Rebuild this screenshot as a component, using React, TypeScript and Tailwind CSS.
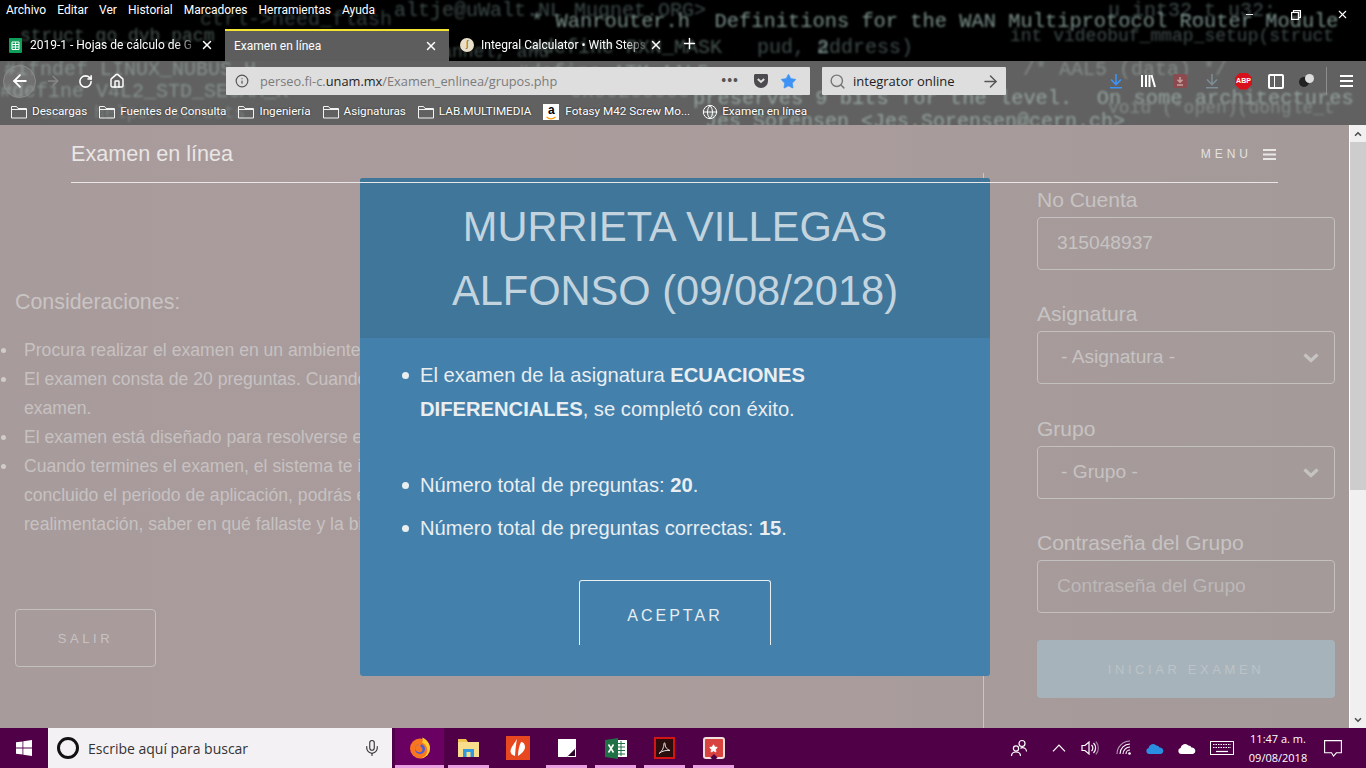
import type { ReactNode } from "react";
import { ChevronUp, ChevronDown, Globe, Info, Mic, Search, ArrowRight, ArrowLeft, RotateCw, Home, Star, X, Plus, Minus } from "lucide-react";

const font = "font-['Liberation_Sans',Arial,sans-serif]";

const codeTop = [
  { text: "altje@uWalt.NL Mugnet.ORG>", cls: "left-[394px] top-[1px] text-[20px] text-[#3c4a48]" },
  { text: "u_int32_t u32;", cls: "left-[1108px] top-[1px] text-[20px] text-[#3f4c4a]" },
  { text: "* Wanrouter.h  Definitions for the WAN Multiprotocol Router Module", cls: "left-[531px] top-[12px] text-[20.4px] text-[#7a908a]" },
  { text: "int videobuf_mmap_setup(struct", cls: "left-[1010px] top-[27px] text-[18px] text-[#3f4c4a]" },
  { text: "ctrl->need_flash", cls: "left-[200px] top-[10px] text-[20px] text-[#323e3c]" },
  { text: "struct go_dvb_pacm", cls: "left-[20px] top-[27px] text-[18px] text-[#46564f]" },
  { text: "contr,", cls: "left-[330px] top-[35px] text-[20px] text-[#54645f]" },
  { text: "second channel, and", cls: "left-[344px] top-[43px] text-[18px] text-[#3f4c4a]" },
  { text: "#define RXN_MASK", cls: "left-[530px] top-[38px] text-[20px] text-[#46564f]" },
  { text: "pud, address)", cls: "left-[757px] top-[38px] text-[20px] text-[#3f4c4a]" },
  { text: "2", cls: "left-[817px] top-[38px] text-[20px] text-[#7a908a]" },
];

const codeBar = [
  { text: "#ifndef LINUX_NUBUS_H", cls: "left-[4px] top-[-1px] text-[20px] text-[#84918d]" },
  { text: "#define ATM_AAL5", cls: "left-[517px] top-[2px] text-[20px] text-[#84918d]" },
  { text: "/* AAL5 (data) */", cls: "left-[1023px] top-[-1px] text-[20px] text-[#828a88]" },
  { text: "#define V4L2_STD_SECAM_K", cls: "left-[0px] top-[21px] text-[20px] text-[#84918d]" },
  { text: "0x00200000", cls: "left-[570px] top-[21px] text-[20px] text-[#828a88]" },
  { text: "preserves 9 bits for the level.  On some architectures", cls: "left-[693px] top-[28px] text-[20.4px] text-[#93a39e]" },
  { text: "void (*open)(dongle_t", cls: "left-[1108px] top-[38px] text-[18px] text-[#828a88]" },
  { text: "Jes Sorensen <Jes.Sorensen@cern.ch>", cls: "left-[705px] top-[51px] text-[20px] text-[#93a39e]" },
  { text: "some helper structs", cls: "left-[40px] top-[43px] text-[18px] text-[#787f7d]" },
];

const bookmarks = ["Descargas", "Fuentes de Consulta", "Ingeniería", "Asignaturas", "LAB.MULTIMEDIA"];

function FolderIcon() {
  return (
    <svg width="16" height="14" viewBox="0 0 16 14" fill="none" stroke="#f2f2f2" strokeWidth="1">
      <path d="M.5 13V1.500h5l1.500 2h8.500V13z" />
      <path d="M.5 4.500h15" />
    </svg>
  );
}

function DownloadArrow({ color }: { color: string }) {
  return (
    <svg width="16" height="16" viewBox="0 0 16 16" fill="none" stroke={color} strokeWidth="1.600">
      <path d="M8 1v10M3 6.500 8 11.500l5-5M2 14.700h12" />
    </svg>
  );
}

function CloseBtn() {
  return <X size={14} strokeWidth={2.5} className="shrink-0 text-white" />;
}

function BrowserChrome() {
  return (
    <div className="relative h-[125px] shrink-0 overflow-hidden bg-black">
      {/* title area */}
      <div className="relative h-[61px] overflow-hidden">
        {codeTop.map((c) => (
          <span key={c.text} className={`absolute whitespace-pre font-['Liberation_Mono',monospace] leading-none blur-[1px] ${c.cls}`}>
            {c.text}
          </span>
        ))}
        <div className="absolute inset-x-0 top-0 flex h-[20px] items-center gap-[11px] pl-[6px] font-['Roboto',sans-serif] text-[12px] text-white">
          {["Archivo", "Editar", "Ver", "Historial", "Marcadores", "Herramientas", "Ayuda"].map((m) => (
            <span key={m} className="[text-shadow:0_0_2px_#000]">{m}</span>
          ))}
        </div>
        <div className="absolute right-0 top-[8px] flex w-[122px] items-center justify-between pr-[17px]">
          <Minus size={11} strokeWidth={2} className="text-white" />
          <svg width="10" height="10" viewBox="0 0 10 10" fill="none" stroke="#fff" strokeWidth="1.200">
            <path d="M2.500 2.500V.6h6.900v6.900H7.500" />
            <rect x=".6" y="2.500" width="6.900" height="6.900" />
          </svg>
          <X size={13} strokeWidth={2} className="text-white" />
        </div>
        {/* tabs */}
        <div className="absolute left-0 top-[29px] flex h-[32px] items-stretch font-['Roboto',sans-serif] text-[12px] text-white">
          <div className="flex w-[225px] items-center pl-[9px] pr-[11px]">
            <svg width="13" height="15" viewBox="0 0 13 15" className="mr-[8px] shrink-0">
              <rect width="13" height="15" rx="1" fill="#0f9d58" />
              <path d="M3 4h7v7.500H3zM3 6.500h7M3 9h7M6.500 4v7.500" stroke="#fff" strokeWidth="1" fill="none" />
            </svg>
            <span className="flex-1 overflow-hidden whitespace-nowrap [mask-image:linear-gradient(to_right,#000_85%,transparent)]">2019-1 - Hojas de cálculo de G</span>
            <CloseBtn />
          </div>
          <div className="flex w-[224px] items-center justify-between border-t-2 border-[#f4e32f] bg-[#5d5d5d] pl-[9px] pr-[11px]">
            <span>Examen en línea</span>
            <CloseBtn />
          </div>
          <div className="flex w-[225px] items-center pl-[11px] pr-[11px]">
            <span className="mr-[7px] flex h-[14px] w-[14px] shrink-0 items-center justify-center rounded-full bg-[#e9dfc8] text-[9px] text-[#6b5a3a]">∫</span>
            <span className="flex-1 overflow-hidden whitespace-nowrap [mask-image:linear-gradient(to_right,#000_85%,transparent)]">Integral Calculator • With Steps</span>
            <CloseBtn />
          </div>
          <Plus size={17} strokeWidth={2} className="ml-[7px] mt-[6px] text-white" />
        </div>
      </div>

      {/* toolbar and bookmarks */}
      <div className="relative h-[64px] overflow-hidden bg-[#616161]">
        {codeBar.map((c) => (
          <span key={c.text} className={`absolute whitespace-pre font-['Liberation_Mono',monospace] leading-none blur-[1px] ${c.cls}`}>
            {c.text}
          </span>
        ))}
        <div className="relative flex h-[40px] items-center">
          <div className="ml-[3px] flex h-[33px] w-[33px] shrink-0 items-center justify-center rounded-full border border-[#8a8a8a] bg-white/10">
            <ArrowLeft size={20} strokeWidth={2.200} className="text-white" />
          </div>
          <ArrowRight size={16} strokeWidth={2} className="ml-[9px] shrink-0 text-[#888]" />
          <RotateCw size={15} strokeWidth={2.500} className="ml-[17px] shrink-0 text-white" />
          <Home size={16} strokeWidth={2.200} className="ml-[16px] shrink-0 text-white" />
          <div className="ml-[101px] flex h-[28px] w-[584px] shrink-0 items-center rounded-[1px] bg-[#dedede] pl-[9px] pr-[13px] font-['Open_Sans',sans-serif] text-[12.8px] text-[#7b7b7b]">
            <Info size={14} className="mr-[11px] shrink-0 text-[#555]" />
            <span className="flex-1 pt-[2px]">perseo.fi-c.<span className="text-[#222]">unam.mx</span>/Examen_enlinea/grupos.php</span>
            <span className="mr-[14px] text-[13px] font-bold tracking-[1px] text-[#555]">•••</span>
            <svg width="16" height="16" viewBox="0 0 16 16" className="mr-[11px] shrink-0">
              <path d="M1 2.500C1 1.700 1.700 1 2.500 1h11c.8 0 1.500.7 1.500 1.500V8a7 7 0 0 1-14 0z" fill="#4a4a4f" />
              <path d="M4.800 6 8 9l3.200-3" fill="none" stroke="#dedede" strokeWidth="2" />
            </svg>
            <Star size={17} fill="#3d93f5" strokeWidth={1} className="shrink-0 text-[#3d93f5]" />
          </div>
          <div className="ml-[12px] flex h-[28px] w-[184px] shrink-0 items-center rounded-[1px] bg-[#dedede] pl-[7px] pr-[6px] font-['Open_Sans',sans-serif] text-[13px] text-[#222]">
            <Search size={17} strokeWidth={2} className="mr-[7px] shrink-0 text-[#777]" />
            <span className="flex-1 pt-[2px]">integrator online</span>
            <ArrowRight size={19} strokeWidth={1.800} className="shrink-0 text-[#555]" />
          </div>
          <div className="ml-[102px] shrink-0"><DownloadArrow color="#3d93f5" /></div>
          <svg width="16" height="16" viewBox="0 0 16 16" className="ml-[16px] shrink-0" fill="none" stroke="#fff" strokeWidth="2">
            <path d="M2 2v12M6 2v12M9.500 2v12M11.500 2l3.500 12" />
          </svg>
          <div className="ml-[17px] flex h-[14px] w-[14px] shrink-0 items-center justify-center rounded-[2px] bg-[#8a4a4e]">
            <svg width="10" height="10" viewBox="0 0 10 10" fill="none" stroke="#c9a0a0" strokeWidth="1.500">
              <path d="M5 1v5M2.500 3.800 5 6.300l2.500-2.500M2 9h6" />
            </svg>
          </div>
          <div className="ml-[17px] shrink-0"><DownloadArrow color="#7d8c95" /></div>
          <div className={`ml-[15px] flex h-[17px] w-[17px] shrink-0 items-center justify-center bg-[#d8101c] text-[7px] font-bold text-white [clip-path:polygon(30%_0,70%_0,100%_30%,100%_70%,70%_100%,30%_100%,0_70%,0_30%)] ${font}`}>
            ABP
          </div>
          <div className="ml-[16px] flex h-[15px] w-[16px] shrink-0 rounded-[2px] border-2 border-white">
            <div className="w-[5px] border-r border-white" />
          </div>
          <div className="relative ml-[15px] h-[14px] w-[15px] shrink-0">
            <span className="absolute left-0 top-[3px] h-[10px] w-[10px] rounded-full bg-[#222]" />
            <span className="absolute right-0 top-0 h-[9px] w-[9px] rounded-full bg-[#ddd]" />
          </div>
          <div className="ml-[12px] h-[28px] w-px shrink-0 bg-[#8d8d8d]" />
          <svg width="13" height="12" viewBox="0 0 13 12" className="ml-[13px] shrink-0" stroke="#fff" strokeWidth="2">
            <path d="M0 1h13M0 6h13M0 11h13" />
          </svg>
        </div>
        <div className="relative flex h-[24px] items-center pb-[2px] pl-[11px] font-['Roboto',sans-serif] text-[11.7px] text-white [text-shadow:0_0_2px_#222]">
          {bookmarks.map((b) => (
            <span key={b} className="mr-[12px] flex items-center gap-[5px]">
              <FolderIcon />
              {b}
            </span>
          ))}
          <span className="mr-[12px] flex items-center gap-[6px]">
            <span className={`relative flex h-[16px] w-[16px] items-start justify-center bg-white text-[12px] font-bold leading-[12px] text-black [text-shadow:none] ${font}`}>
              a
              <svg width="10" height="4" viewBox="0 0 10 4" className="absolute bottom-0 left-[3px]" fill="none" stroke="#f90" strokeWidth="1.200">
                <path d="M.5 1c3 2.500 6 2.500 9 0" />
              </svg>
            </span>
            Fotasy M42 Screw Mo...
          </span>
          <span className="flex items-center gap-[4px]">
            <Globe size={16} strokeWidth={1.500} className="text-white" />
            Examen en línea
          </span>
        </div>
      </div>
    </div>
  );
}

function SelectChevron() {
  return (
    <svg width="16" height="11" viewBox="0 0 16 11" fill="none" stroke="#c6c3c3" strokeWidth="3.200">
      <path d="M1.500 2.500 8 8.500l6.500-6" />
    </svg>
  );
}

function Field({ label, children, last }: { label: string; children: ReactNode; last?: boolean }) {
  return (
    <div className={last ? "mb-[27px]" : "mb-[33.4px]"}>
      <div className="mb-[7px] text-[21px] leading-[21px] text-[#c6c3c3]">{label}</div>
      <div className="flex h-[53px] items-center justify-between rounded-[4px] border border-[#c3c0c0] pl-[19px] pr-[15px] text-[19.2px] text-[#c6c3c3]">
        {children}
      </div>
    </div>
  );
}

function PageContent() {
  return (
    <div className={`relative flex min-h-0 flex-1 ${font}`}>
      <div className="relative flex min-w-0 flex-1 flex-col overflow-hidden bg-gradient-to-r from-[#a89b9b] via-[#ab9c9c] to-[#a39a99]">
        {/* header */}
        <div className="relative z-10 mx-[71px] flex h-[58px] shrink-0 items-center justify-between border-b border-[#e8e6e6] pr-[2px] pt-[1px]">
          <span className="text-[21.6px] text-[#e9e6e6]">Examen en línea</span>
          <span className="flex items-center gap-[11px] text-[12px] tracking-[4px] text-[#e4e1e1]">
            MENU
            <svg width="13" height="11" viewBox="0 0 13 11" stroke="#e9e6e6" strokeWidth="2">
              <path d="M0 1h13M0 5.500h13M0 10h13" />
            </svg>
          </span>
        </div>

        <div className="flex min-h-0 flex-1">
          {/* left column */}
          <div className="w-[983px] shrink-0 pl-[15px] pt-[107px]">
            <h2 className="text-[21.4px] leading-[24px] text-[#c8c4c4]">Consideraciones:</h2>
            <ul className="mt-[22px] list-none text-[17.6px] leading-[29px] text-[#c6c2c2]">
              {[
                [true, "Procura realizar el examen en un ambiente"],
                [true, "El examen consta de 20 preguntas. Cuando"],
                [false, "examen."],
                [true, "El examen está diseñado para resolverse e"],
                [true, "Cuando termines el examen, el sistema te i"],
                [false, "concluido el periodo de aplicación, podrás e"],
                [false, "realimentación, saber en qué fallaste y la bi"],
              ].map(([bullet, line]) => (
                <li key={String(line)} className="relative -ml-[15px] whitespace-nowrap pl-[24px]">
                  {bullet && <span className="absolute left-[1px] top-[12px] h-[5px] w-[5px] rounded-full bg-[#cfcccc]" />}
                  {line}
                </li>
              ))}
            </ul>
            <div className="mt-[70px] flex h-[58px] w-[141px] items-center justify-center rounded-[4px] border border-[#c3c0c0] pt-[2px] text-[13px] tracking-[3.600px] text-[#c6c3c3]">
              SALIR
            </div>
          </div>

          {/* right column */}
          <div className="-mt-[10px] flex-1 border-l border-[#c9c6c6] pl-[53px] pr-[14px] pt-[16px]">
            <div className="w-[298px]">
              <Field label="No Cuenta">315048937</Field>
              <Field label="Asignatura">
                <span className="pl-[4px]">- Asignatura -</span>
                <SelectChevron />
              </Field>
              <Field label="Grupo">
                <span className="pl-[4px]">- Grupo -</span>
                <SelectChevron />
              </Field>
              <Field label="Contraseña del Grupo" last>
                <span className="text-[#bcb8b8]">Contraseña del Grupo</span>
              </Field>
              <div className="flex h-[58px] items-center justify-center rounded-[4px] bg-[#a6b3ba] pt-[2px] text-[13px] tracking-[3.600px] text-[#bcc3c8]">
                INICIAR EXAMEN
              </div>
            </div>
          </div>
        </div>

        {/* modal */}
        <div className="absolute left-[360px] top-[53px] h-[498px] w-[630px] overflow-hidden rounded-[3px] bg-[#4380ab]">
          <div className="flex h-[160px] flex-col items-center justify-center bg-[#3f769a] pt-[2px] text-[41.6px] leading-[64px] text-[#c3d4df]">
            <div>MURRIETA VILLEGAS</div>
            <div>ALFONSO (09/08/2018)</div>
          </div>
          <ul className="pl-[60px] pt-[20px] text-[20.2px] text-[#e9eef1]">
            <li className="relative w-[420px] leading-[34px]">
              <span className="absolute -left-[18px] top-[14px] h-[7px] w-[7px] rounded-full bg-[#e9eef1]" />
              El examen de la asignatura <b>ECUACIONES DIFERENCIALES</b>, se completó con éxito.
            </li>
            <li className="relative mt-[42px] leading-[34px]">
              <span className="absolute -left-[18px] top-[14px] h-[7px] w-[7px] rounded-full bg-[#e9eef1]" />
              Número total de preguntas: <b>20</b>.
            </li>
            <li className="relative mt-[9px] leading-[34px]">
              <span className="absolute -left-[18px] top-[14px] h-[7px] w-[7px] rounded-full bg-[#e9eef1]" />
              Número total de preguntas correctas: <b>15</b>.
            </li>
          </ul>
          <div className="ml-[219px] mt-[35px] flex h-[65px] w-[192px] items-center justify-center rounded-t-[3px] border-x border-t border-[#e9eef1] pt-[5px] text-[16px] tracking-[3px] text-[#e9eef1]">
            ACEPTAR
          </div>
        </div>
      </div>

      {/* scrollbar */}
      <div className="flex w-[17px] shrink-0 flex-col border-l border-[#fff] bg-[#f0f0f0]">
        <div className="flex h-[17px] items-center justify-center">
          <ChevronUp size={10} strokeWidth={4} className="text-[#505050]" />
        </div>
        <div className="h-[348px] bg-[#cdcdcd]" />
        <div className="flex-1" />
        <div className="flex h-[17px] items-center justify-center">
          <ChevronDown size={10} strokeWidth={4} className="text-[#505050]" />
        </div>
      </div>
    </div>
  );
}

function TaskCell({ children, active, line = true }: { children: ReactNode; active?: boolean; line?: boolean }) {
  return (
    <div className={`relative flex w-[49px] items-center justify-center ${active ? "bg-[#6a0162]" : ""}`}>
      {children}
      {line && <span className={`absolute bottom-0 h-[3px] bg-[#e8a0e0] ${active ? "inset-x-0" : "inset-x-[4px]"}`} />}
    </div>
  );
}

function OneDrive({ fill }: { fill: string }) {
  return (
    <svg width="18" height="12" viewBox="0 0 18 12" fill={fill}>
      <path d="M3 12a3 3 0 0 1-.4-5.900A4.500 4.500 0 0 1 10.500 3.500a3.500 3.500 0 0 1 3 2.100A3.300 3.300 0 0 1 15 12z" />
    </svg>
  );
}

function Taskbar() {
  return (
    <div className="flex h-[40px] shrink-0 items-stretch bg-[#4f0047] font-['Open_Sans',sans-serif] text-white">
      <div className="flex w-[48px] items-center justify-center">
        <svg width="16" height="16" viewBox="0 0 16 16" fill="#fff">
          <path d="M0 2.300 6.500 1.400v6.200H0zM7.300 1.300 16 0v7.600H7.300zM0 8.400h6.500v6.200L0 13.700zM7.300 8.400H16V16l-8.700-1.300z" />
        </svg>
      </div>
      <div className="flex w-[344px] items-center bg-[#f4f1f5] pl-[9px] pr-[11px] text-[14px] text-[#333]">
        <span className="mr-[9px] h-[22px] w-[22px] rounded-full border-[3px] border-[#111]" />
        <span className="flex-1">Escribe aquí para buscar</span>
        <Mic size={18} strokeWidth={1.500} className="text-[#333]" />
      </div>
      <div className="ml-[3px] flex items-stretch">
        <TaskCell active>
          <svg width="22" height="22" viewBox="0 0 22 22">
            <circle cx="11" cy="11.500" r="10" fill="#f7761f" />
            <path d="M13 .5c5 2 8 6 8 11a10 10 0 0 1-10 10c5-1 8-5 7-10-.5-3-2.500-5-5-6 1-1 1-3 0-5z" fill="#ffcb2d" />
            <circle cx="11" cy="12" r="5" fill="#4a5ed8" />
            <path d="M6 11c1-3 4-5 7-4-2 1-2 2-1 3 2 1 2 4 0 5-3 1-6-1-6-4z" fill="#f7761f" />
          </svg>
        </TaskCell>
        <TaskCell>
          <svg width="21" height="18" viewBox="0 0 21 18">
            <rect y="3" width="21" height="15" fill="#f8dd8c" />
            <path d="M0 0h8l2 3H0z" fill="#f0c350" />
            <rect x="5" y="10" width="11" height="8" fill="#2f9ade" />
            <rect x="8.500" y="13" width="4" height="5" fill="#f8dd8c" />
          </svg>
        </TaskCell>
        <TaskCell line={false}>
          <svg width="24" height="24" viewBox="0 0 24 24">
            <rect width="24" height="24" fill="#e8481f" />
            <path d="M11 3C8 8 5 11 4.500 15c0 2 1 4 4.500 5 .5-5 .5-9 2-17zM15 6c3 0 4 3 4 5 0 4-4 7-7 9 0-5 1-10 3-14z" fill="#fff" />
          </svg>
        </TaskCell>
        <TaskCell>
          <svg width="18" height="18" viewBox="0 0 18 18">
            <path d="M0 0h18v9l-9 9H0z" fill="#fff" />
            <path d="M9 18l9-9v9z" fill="#fff" />
            <path d="M10 17l7-7v7z" fill="#2a0228" />
          </svg>
        </TaskCell>
        <TaskCell>
          <svg width="22" height="21" viewBox="0 0 22 21">
            <rect x="8" y="2" width="14" height="17" fill="#fff" />
            <path d="M12 5.500h8M12 9h8M12 12.500h8M12 16h8M16 3v15" stroke="#1e7145" strokeWidth="1" />
            <path d="M0 2 13 0v21L0 19z" fill="#1e7145" />
            <path d="M3.500 6.500l5 8M8.500 6.500l-5 8" stroke="#fff" strokeWidth="1.600" />
          </svg>
        </TaskCell>
        <TaskCell>
          <div className="flex h-[22px] w-[21px] items-center justify-center border-2 border-[#d31515] bg-[#2a0d0d]">
            <svg width="13" height="13" viewBox="0 0 13 13" fill="none" stroke="#ddd" strokeWidth="1">
              <path d="M1 11.500c3-2 5-6 5-10 0-1 1-1 1 0 0 4 2 6 5 7-4-.5-8 .5-11 3z" />
            </svg>
          </div>
        </TaskCell>
        <TaskCell>
          <div className="relative flex h-[22px] w-[22px] items-center justify-center rounded-[3px] border-2 border-[#f3dede] bg-[#d8433f]">
            <Star size={9} fill="#fff" className="text-white" />
            <span className="absolute -bottom-[2px] left-1/2 h-[5px] w-[5px] -translate-x-1/2 translate-y-[1px] rotate-45 bg-[#4f0047]" />
          </div>
        </TaskCell>
      </div>

      {/* tray */}
      <div className="flex flex-1 items-center justify-end pr-[24px]">
        <svg width="18" height="18" viewBox="0 0 18 18" fill="none" stroke="#fff" strokeWidth="1.200">
          <circle cx="12" cy="4.500" r="3" />
          <circle cx="6" cy="9.500" r="2.600" />
          <path d="M1.500 17c0-2.500 2-4 4.500-4s4.500 1.500 4.500 4M10.500 9.500c.5-.5 1-.8 1.800-.8 2 0 4.200 1.300 4.200 3.800" />
        </svg>
        <svg width="14" height="8" viewBox="0 0 14 8" fill="none" stroke="#fff" strokeWidth="1.200" className="ml-[24px]">
          <path d="M1 7.300 7 1l6 6.300" />
        </svg>
        <svg width="18" height="16" viewBox="0 0 18 16" fill="none" stroke="#fff" strokeWidth="1.200" className="ml-[15px]">
          <path d="M1 5.500h3L8 2v12l-4-3.500H1z" />
          <path d="M10.500 5a4 4 0 0 1 0 6M12.500 3a7 7 0 0 1 0 10" />
          <path d="M14.800 1.500a9.500 9.500 0 0 1 0 13" stroke="#9a7a98" />
        </svg>
        <svg width="16" height="16" viewBox="0 0 16 16" fill="none" stroke="#fff" strokeWidth="1.100" className="ml-[17px]">
          <path d="M1 14A13 13 0 0 1 14 1" stroke="#b9a0b7" />
          <path d="M4 14A10 10 0 0 1 14 4M7 14A7 7 0 0 1 14 7M10 14A4 4 0 0 1 14 10" />
          <circle cx="13.500" cy="13.500" r="1.300" fill="#fff" stroke="none" />
        </svg>
        <div className="ml-[14px] w-[18px]"><OneDrive fill="#2a8fe0" /></div>
        <div className="ml-[14px] w-[18px]"><OneDrive fill="#fff" /></div>
        <svg width="24" height="14" viewBox="0 0 24 14" fill="none" stroke="#fff" className="ml-[14px]">
          <rect x=".5" y=".5" width="23" height="13" />
          <path d="M3 3.500h18M3 6.500h18" strokeWidth="1.200" strokeDasharray="1.500 1" />
          <path d="M6 10.500h12" strokeWidth="1.200" />
        </svg>
        <div className="ml-[14px] flex w-[60px] flex-col items-center whitespace-nowrap text-[11px] leading-[19px]">
          <span>11:47 a. m.</span>
          <span>09/08/2018</span>
        </div>
        <svg width="18" height="17" viewBox="0 0 18 17" fill="none" stroke="#fff" strokeWidth="1.100" className="ml-[16px]">
          <path d="M.6.6h16.800v12.200h-5L9.500 16 7.500 12.800H.6z" />
        </svg>
      </div>
    </div>
  );
}

export default function App() {
  return (
    <div className="flex h-screen w-full flex-col overflow-hidden">
      <BrowserChrome />
      <PageContent />
      <Taskbar />
    </div>
  );
}
